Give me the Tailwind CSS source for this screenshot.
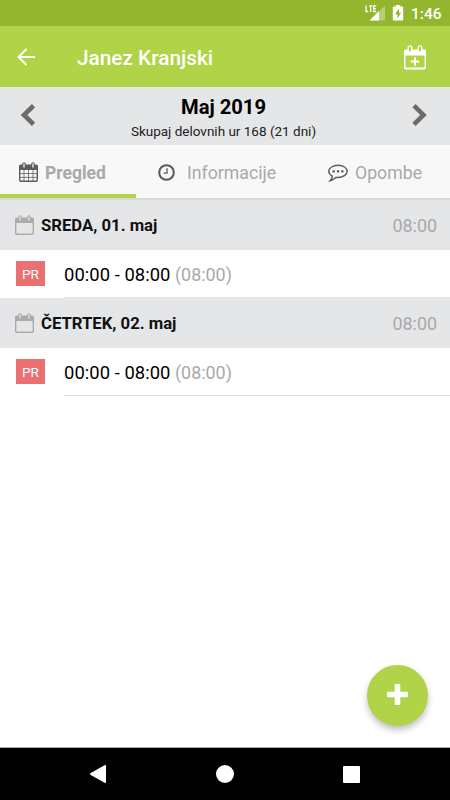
<!DOCTYPE html>
<html lang="sl">
<head>
<meta charset="utf-8">
<meta name="viewport" content="width=device-width, initial-scale=1">
<title>Janez Kranjski</title>
<script src="https://cdn.jsdelivr.net/npm/@tailwindcss/browser@4"></script>
</head>
<body class="bg-white">
<div class="relative flex h-[800px] w-[450px] flex-col overflow-hidden bg-white font-[Roboto,sans-serif] text-black">
  <div class="flex h-[26px] shrink-0 items-center justify-end bg-[#94b52e] pr-[9px] text-white">
    <svg class="h-[26px] w-[46px]" viewBox="0 0 46 26" fill="#fff">
      <path d="M5 20.5 20 5.500V20.500Z" fill-opacity=".35"/>
      <path d="M4.500 20.500 14 11V20.500Z"/>
      <path d="M1 5.500V11.500H3.200M4 5.900H7.400M5.700 5.900V12M11.200 5.900H8.800V11.500H11.200M8.800 8.700H11" fill="none" stroke="#fff" stroke-width="1.300"/>
      <path d="M30.800 5h4.400v1.600h2q1 0 1 1V19.500q0 1-1 1h-8.400q-1 0-1-1V7.600q0-1 1-1h2Z"/>
      <path d="M34 8.500 30 14.200H32.400V18.500L36.200 12.800H34Z" fill="#94b52e"/>
    </svg>
    <span class="w-[30px] pt-[1px] text-[15.500px] leading-[26px] font-medium whitespace-nowrap">1:46</span>
  </div>
  <header class="flex h-[61px] shrink-0 items-center bg-[#b0d348] pt-[1px] text-white">
    <svg class="ml-[17px] h-[18px] w-[18px]" viewBox="0 0 18 18" fill="none" stroke="#fff" stroke-width="2"><path d="M18 9H2M9.500 1 1.500 9l8 8"/></svg>
    <h1 class="ml-[42px] flex-1 pt-[3px] text-[20.800px] font-medium whitespace-nowrap">Janez Kranjski</h1>
    <svg class="mr-[23px] h-[25px] w-[24px]" viewBox="0 0 24 25">
      <path d="M2.500 4.500h19q1.500 0 1.500 1.500v16.500q0 2-1.500 2h-19q-1.500 0-1.500-2V6q0-1.500 1.500-1.500Z" fill="#fff"/>
      <path d="M2.500 10.500h19v12h-19Z" fill="#b0d348"/>
      <path d="M7 2.700V6M17 2.700V6" stroke="#fff" stroke-width="5" stroke-linecap="round"/>
      <path d="M7 2.500V5.500M17 2.500V5.500" stroke="#b0d348" stroke-width="2" stroke-linecap="round"/>
      <path d="M12 12.200v8.600M7.700 16.500h8.600" stroke="#fff" stroke-width="1.800"/>
    </svg>
  </header>
  <section class="flex h-[58px] shrink-0 items-center justify-between bg-[#e5e6e8] pr-[20px] pb-[2px] pl-[19px]">
    <svg class="h-[24px] w-[16px]" viewBox="0 0 16 24" fill="none" stroke="#6b6b6b" stroke-width="4.600"><path d="M14.500 2.700 5 12l9.500 9.300"/></svg>
    <div class="pt-[7px] text-center whitespace-nowrap">
      <div class="text-[20.200px] leading-[25px] font-bold">Maj 2019</div>
      <div class="text-[13.500px] leading-[23px] text-[#222]">Skupaj delovnih ur 168 (21 dni)</div>
    </div>
    <svg class="mr-[2px] h-[24px] w-[16px]" viewBox="0 0 16 24" fill="none" stroke="#6b6b6b" stroke-width="4.600"><path d="M2 2.700 11.500 12 2 21.300"/></svg>
  </section>
  <nav class="flex h-[55px] shrink-0 border-b-2 border-[#d7d8da] bg-[#f8f8f8] text-[18px] leading-[52px] whitespace-nowrap text-[#a9a9a9]">
    <div class="flex w-[136px] items-center border-b-4 border-[#b0d348] pt-[4px] pl-[19px] font-bold">
      <svg class="h-[20px] w-[19px]" viewBox="0 0 19 20" fill="none" stroke="#5c5c5c">
        <path d="M1 3.500h17v4H1Z" fill="#5c5c5c"/><rect x=".7" y="3.300" width="17.600" height="16" rx="1.200" stroke-width="1.400"/>
        <path d="M5 8v11M9.500 8v11M14 8v11M1 11.500h17M1 15.400h17" stroke-width=".8"/>
        <path d="M5 2v3M14 2v3" stroke-width="3.600" stroke-linecap="round"/><path d="M5 2v3M14 2v3" stroke="#f8f8f8" stroke-width="1.300" stroke-linecap="round"/>
      </svg>
      <span class="ml-[7px] pt-[2px] text-[17.500px]">Pregled</span>
    </div>
    <div class="flex w-[164px] items-center pt-[1px] pl-[22px]">
      <svg class="h-[17px] w-[17px]" viewBox="0 0 17 17" fill="none" stroke="#5c5c5c"><circle cx="8.500" cy="8.500" r="7.300" stroke-width="2.100"/><path d="M9 4.300v4.900H5.700" stroke-width="1.300"/></svg>
      <span class="ml-[12px] pt-[2px] text-[17.700px]">Informacije</span>
    </div>
    <div class="flex flex-1 items-center pt-[2px] pl-[28px]">
      <svg class="h-[18px] w-[20px]" viewBox="0 0 20 18" fill="none" stroke="#5c5c5c" stroke-width="1.400"><path d="M10 1.200c5 0 9.200 2.700 9.200 6.100s-4.200 6.200-9.200 6.200q-1 0-1.900-.15Q5.500 16 2.200 16.800q1.800-1.700 2.200-4.700Q.8 10.300.8 7.300C.8 3.900 5 1.200 10 1.200Z"/><path d="M4.500 6.300h2.300v2.300h-2.300ZM8.900 6.300h2.300v2.300H8.900ZM13.200 6.300h2.300v2.300h-2.300Z" fill="#5c5c5c" stroke="none"/></svg>
      <span class="ml-[7px] pt-[1px] text-[17.700px]">Opombe</span>
    </div>
  </nav>
  <main class="flex-1">
    <div class="flex h-[50px] items-center bg-[#e5e6e8] pr-[13px] pl-[15px]">
      <svg class="h-[20px] w-[19px]" viewBox="0 0 19 20" fill="none" stroke="#ababab"><path d="M1 3.500h17v4H1Z" fill="#ababab"/><rect x=".7" y="3.300" width="17.600" height="16" rx="1" stroke-width="1.400"/><path d="M5 2v3M14 2v3" stroke-width="3.600" stroke-linecap="round"/><path d="M5 2v3M14 2v3" stroke="#e5e6e8" stroke-width="1.300" stroke-linecap="round"/></svg>
      <span class="ml-[7px] flex-1 pt-[1px] text-[16.700px] font-bold text-[#111]">SREDA, 01. maj</span>
      <span class="pt-[2px] text-[17.900px] text-[#a9a9a9]">08:00</span>
    </div>
    <div class="flex h-[48px]">
      <div class="w-[64px] pt-[11px] pl-[16px]"><div class="flex h-[25px] w-[29px] items-center justify-center bg-[#ea7072] pt-px text-[13.600px] text-white">PR</div></div>
      <div class="flex flex-1 justify-start border-b border-[#e1e2e4] text-[18.400px] leading-[49px] whitespace-nowrap"><span class="w-[111px] tracking-[0.050px]">00:00 - 08:00</span><span class="text-[17.900px] text-[#a9a9a9]">(08:00)</span></div>
    </div>
    <div class="flex h-[50px] items-center bg-[#e5e6e8] pr-[13px] pb-[1px] pl-[15px]">
      <svg class="h-[20px] w-[19px]" viewBox="0 0 19 20" fill="none" stroke="#ababab"><path d="M1 3.500h17v4H1Z" fill="#ababab"/><rect x=".7" y="3.300" width="17.600" height="16" rx="1" stroke-width="1.400"/><path d="M5 2v3M14 2v3" stroke-width="3.600" stroke-linecap="round"/><path d="M5 2v3M14 2v3" stroke="#e5e6e8" stroke-width="1.300" stroke-linecap="round"/></svg>
      <span class="ml-[7px] flex-1 pt-[3px] text-[16.700px] font-bold text-[#111]">ČETRTEK, 02. maj</span>
      <span class="pt-[3px] text-[17.900px] text-[#a9a9a9]">08:00</span>
    </div>
    <div class="flex h-[48px]">
      <div class="w-[64px] pt-[11px] pl-[16px]"><div class="flex h-[25px] w-[29px] items-center justify-center bg-[#ea7072] pt-px text-[13.600px] text-white">PR</div></div>
      <div class="flex flex-1 justify-start border-b border-[#e1e2e4] text-[18.400px] leading-[49px] whitespace-nowrap"><span class="w-[111px] tracking-[0.050px]">00:00 - 08:00</span><span class="text-[17.900px] text-[#a9a9a9]">(08:00)</span></div>
    </div>
  </main>
  <button class="absolute right-[22px] bottom-[74px] flex size-[61px] items-center justify-center rounded-full bg-[#b0d348] shadow-[0_4px_6px_rgba(0,0,0,0.25)]" aria-label="Dodaj">
    <svg class="mb-[2px] size-[21px]" viewBox="0 0 21 21" fill="#fff"><rect x="7.700" width="5.600" height="21" rx="1"/><rect y="7.700" width="21" height="5.600" rx="1"/></svg>
  </button>
  <footer class="flex h-[53px] shrink-0 items-center border-t border-[#aaa] bg-black">
    <svg class="ml-[90px] h-[18px] w-[16px]" viewBox="0 0 16 18" fill="#fff"><path d="M.3 8.300Q-.2 9 .3 9.700L15 17.900q1 .2 1-.6V.7q0-.8-1-.6Z"/></svg>
    <div class="ml-[110px] size-[18px] rounded-full bg-white"></div>
    <div class="ml-[109px] size-[17px] rounded-[1px] bg-white"></div>
  </footer>
</div>
</body>
</html>
